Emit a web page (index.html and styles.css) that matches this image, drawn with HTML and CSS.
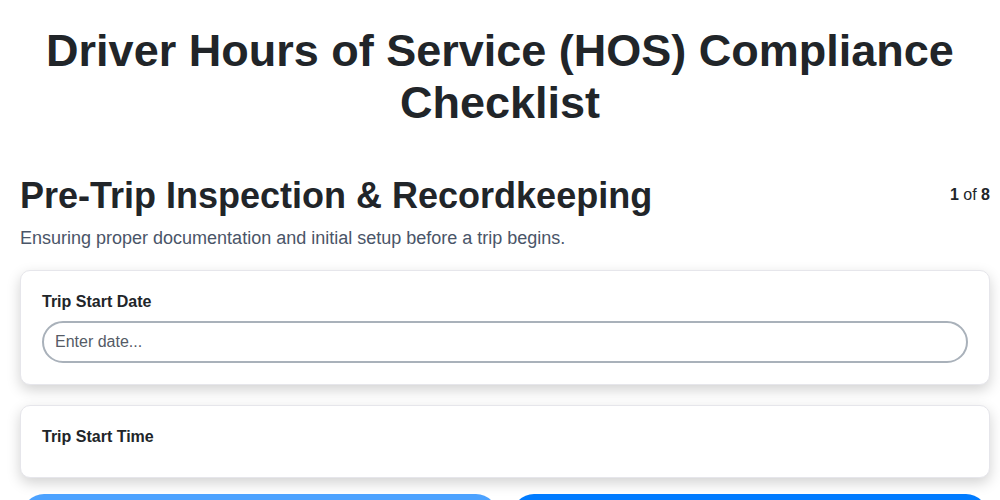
FILE: index.html
```html
<!DOCTYPE html>
<html lang="en">
<head>
  <meta charset="UTF-8" />
  <title>HOS Compliance Checklist</title>
  <link rel="stylesheet" href="styles.css">
</head>
<body>

  <h1>Driver Hours of Service (HOS) Compliance Checklist</h1>

  <div class="wizard">
    <div class="step-header">
      <h2>Pre-Trip Inspection &amp; Recordkeeping</h2>
      <div class="step-count"><b>1</b> of <b>8</b></div>
    </div>
    <p class="step-desc">Ensuring proper documentation and initial setup before a trip begins.</p>

    <div class="fields">
      <div class="field-card">
        <label for="tripDate">Trip Start Date</label>
        <input type="text" id="tripDate" placeholder="Enter date...">
      </div>

      <div class="field-card">
        <label for="tripTime">Trip Start Time</label>
      </div>
    </div>

    <div class="nav">
      <button class="nav-btn" id="prevBtn" disabled>Previous</button>
      <button class="nav-btn" id="nextBtn">Next</button>
    </div>
  </div>

</body>
</html>
```

FILE: styles.css
```css
body {
  margin: 0;
  padding: 0;
  background: #fff;
  font-family: 'Liberation Sans', Arial, sans-serif;
  color: #212529;
}

h1 {
  font-size: 45px;
  line-height: 1.15;
  text-align: center;
  margin: 25px 20px 0;
}

.wizard {
  padding: 0 10px 0 20px;
}

.step-header {
  display: flex;
  justify-content: space-between;
  align-items: center;
  margin-top: 46px;
}

.step-header h2 {
  font-size: 36px;
  line-height: 1.15;
  margin: 0;
}

.step-count {
  font-size: 16px;
}

.step-desc {
  font-size: 18px;
  color: #4a5568;
  margin: 12px 0 21px;
}

.fields {
  display: flex;
  flex-direction: column;
  gap: 20px;
  margin-bottom: 16px;
}

.field-card {
  background: #fff;
  border: 1px solid #e6e6eb;
  border-radius: 10px;
  padding: 21px 21px 21px;
  box-shadow: 0 5px 14px rgba(0, 0, 0, 0.18);
}

.field-card label {
  display: block;
  font-size: 16px;
  font-weight: bold;
  line-height: 19px;
  margin-bottom: 10px;
}

.field-card input {
  display: block;
  width: 100%;
  box-sizing: border-box;
  height: 42px;
  padding: 0 11px;
  font-family: inherit;
  font-size: 16px;
  color: #212529;
  border: 2px solid #a9b1ba;
  border-radius: 21px;
  outline: none;
}

.field-card input::placeholder {
  color: #555b66;
}

.nav {
  display: flex;
  gap: 14px;
  padding: 0 2px;
}

.nav-btn {
  flex: 1;
  height: 44px;
  border: none;
  border-radius: 22px;
  background-color: #007bff;
  color: #fff;
  font-family: inherit;
  font-size: 16px;
  font-weight: bold;
  cursor: pointer;
}

.nav-btn:disabled {
  opacity: 0.7;
  cursor: default;
}
```
